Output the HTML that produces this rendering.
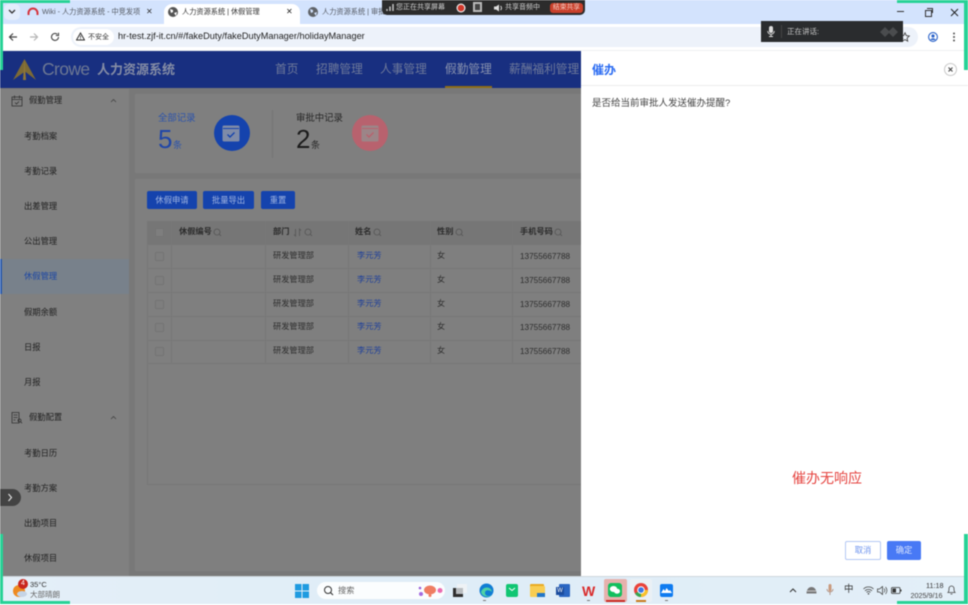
<!DOCTYPE html>
<html lang="zh"><head><meta charset="utf-8"><title>休假管理</title>
<style>
html,body{margin:0;padding:0;background:#fff}
#p{position:relative;width:968px;height:605px;overflow:hidden;background:#fff;font-family:"Liberation Sans","Noto Sans CJK SC",sans-serif;filter:blur(.45px)}
#p div,#p span.t,#p svg{position:absolute}
.t{position:absolute;white-space:nowrap;line-height:1}
.g{background:#27d296}
.si{color:#222;font-size:8.3px;left:24px}
.cb{left:155px;width:7px;height:7px;border:1px solid #737373;border-radius:1px;background:#7e7e7e}
.hl{left:147px;width:434px;height:1px;background:#777}
.vl{top:221px;width:1px;height:142px;background:#777}
.c{font-size:8.2px;color:#2e2e2e}
.h{font-size:8.2px;color:#2b2b2b;font-weight:bold;top:228px}
.b{top:191px;height:18px;background:#1543ad;border-radius:2px;color:#a0b4e0;font-size:8.3px;line-height:18px;text-align:center}
.n{top:64px;font-size:11.7px;color:#6f7a9a}
</style></head><body><div id="p">

<!-- tab strip -->
<div style="left:0;top:0;width:968px;height:24px;background:#d3e3fd"></div>
<div style="left:4px;top:4px;width:16px;height:16px;background:#e4edfc;border-radius:5px"></div>
<svg style="left:8px;top:9px" width="8" height="6"><path d="M1 1l3 3 3-3" fill="none" stroke="#333" stroke-width="1.3"/></svg>
<svg style="left:27px;top:7px" width="12" height="9"><path d="M1.5 8V6a4.5 4.5 0 0 1 9 0v2" fill="none" stroke="#d5333d" stroke-width="2"/></svg>
<span class="t" style="left:42px;top:8px;font-size:7.2px;color:#555a63">Wiki - 人力资源系统 - 中竞发项</span>
<span class="t" style="left:146px;top:8px;font-size:8px;color:#333">✕</span>
<div style="left:164px;top:4px;width:136px;height:20px;background:#fff;border-radius:8px 8px 0 0"></div>
<svg style="left:168px;top:7px" width="10" height="10"><circle cx="5" cy="5" r="5" fill="#555"/><path d="M2 2l3 1v2l-2 1zM6 6l3-1-1 4z" fill="#fff"/></svg>
<span class="t" style="left:182px;top:8px;font-size:7.2px;color:#333">人力资源系统 | 休假管理</span>
<span class="t" style="left:286px;top:8px;font-size:8px;color:#222">✕</span>
<svg style="left:308px;top:7px" width="10" height="10"><circle cx="5" cy="5" r="5" fill="#5f6368"/><path d="M2 2l3 1v2l-2 1zM6 6l3-1-1 4z" fill="#d3e3fd"/></svg>
<span class="t" style="left:322px;top:8px;font-size:7.2px;color:#555a63">人力资源系统 | 审批管理</span>

<!-- share bar -->
<div style="left:382px;top:0;width:203px;height:15px;background:#2c2c2c;border-radius:0 0 5px 5px"></div>
<svg style="left:386px;top:3px" width="8" height="9"><path d="M1 8V6M4 8V3.5M7 8V1" stroke="#ccc" stroke-width="1.4"/></svg>
<span class="t" style="left:396px;top:4px;font-size:7px;color:#d0d0d0">您正在共享屏幕</span>
<svg style="left:456px;top:3px" width="10" height="10"><circle cx="5" cy="5" r="4.500" fill="#eee"/><circle cx="5" cy="5" r="3.300" fill="#d2392c"/></svg>
<div style="left:473px;top:2px;width:9px;height:10px;background:#b9b9b9"></div>
<div style="left:475px;top:4px;width:5px;height:6px;background:#444"></div>
<svg style="left:494px;top:4px" width="10" height="8"><path d="M0 2.500h2L5 .5v7L2 5.500H0z" fill="#ddd"/><path d="M6.500 2a2.500 2.500 0 0 1 0 4" fill="none" stroke="#ddd"/></svg>
<span class="t" style="left:505px;top:4px;font-size:7px;color:#d0d0d0">共享音频中</span>
<div style="left:550px;top:3px;width:33px;height:10px;background:#c9402b;border-radius:3px;color:#f3c9bf;font-size:6.800px;line-height:10px;text-align:center">结束共享</div>

<!-- window controls -->
<div style="left:897px;top:11px;width:7px;height:1px;background:#333"></div>
<div style="left:925px;top:10px;width:5px;height:5px;border:1px solid #333"></div>
<div style="left:927px;top:8px;width:5px;height:1px;background:#333"></div>
<div style="left:932px;top:8px;width:1px;height:5px;background:#333"></div>
<svg style="left:950px;top:8px" width="9" height="9"><path d="M1 1l7 7M8 1l-7 7" stroke="#222" stroke-width="1"/></svg>

<!-- toolbar -->
<div style="left:0;top:24px;width:968px;height:27px;background:#fff"></div>
<svg style="left:8px;top:32px" width="10" height="10"><path d="M9 5H1.500M5 1.500L1.500 5 5 8.500" fill="none" stroke="#444" stroke-width="1.200"/></svg>
<svg style="left:29px;top:32px" width="10" height="10"><path d="M1 5h7.500M5 1.500L8.500 5 5 8.500" fill="none" stroke="#b5b5b5" stroke-width="1.200"/></svg>
<svg style="left:50px;top:32px" width="10" height="10"><path d="M8.500 5A3.500 3.500 0 1 1 7.300 2.300M8.500 .8v2.700H5.800" fill="none" stroke="#444" stroke-width="1.100"/></svg>
<div style="left:71px;top:27px;width:847px;height:20px;background:#edf2fa;border-radius:10px"></div>
<div style="left:73px;top:29px;width:41px;height:16px;background:#fff;border-radius:8px"></div>
<svg style="left:76px;top:32px" width="9" height="9"><path d="M4.500 1L8.500 8H.5z" fill="none" stroke="#333" stroke-width="1"/><path d="M4.500 3.500v2.200M4.500 6.300v.8" stroke="#333" stroke-width=".8"/></svg>
<span class="t" style="left:88px;top:34px;font-size:7px;color:#333">不安全</span>
<span class="t" style="left:118px;top:32px;font-size:9.180px;color:#222">hr-test.zjf-it.cn/#/fakeDuty/fakeDutyManager/holidayManager</span>
<svg style="left:928px;top:32px" width="10" height="10"><circle cx="5" cy="5" r="4.400" fill="none" stroke="#2a62c9" stroke-width="1.100"/><circle cx="5" cy="4" r="1.600" fill="#2a62c9"/><path d="M2.300 8a3 3 0 0 1 5.400 0" fill="#2a62c9"/></svg>
<svg style="left:952px;top:32px" width="4" height="10"><circle cx="2" cy="1.500" r="1" fill="#555"/><circle cx="2" cy="5" r="1" fill="#555"/><circle cx="2" cy="8.500" r="1" fill="#555"/></svg>
<svg style="left:900px;top:32px" width="10" height="10"><path d="M5 .8l1.300 2.800 3 .4-2.200 2.100.6 3L5 7.600 2.300 9.100l.6-3L.7 4l3-.4z" fill="none" stroke="#444" stroke-width=".9"/></svg>
<div style="left:0;top:50px;width:968px;height:1px;background:#eef0f2"></div>

<!-- speaking bubble -->
<div style="left:761px;top:21px;width:142px;height:21px;background:#2a2c2e"></div>
<svg style="left:767px;top:26px" width="8" height="11"><rect x="2" y="0" width="4" height="7" rx="2" fill="#ddd"/><path d="M.7 5a3.300 3.300 0 0 0 6.600 0M4 8.500V10M2 10.500h4" fill="none" stroke="#ddd" stroke-width=".9"/></svg>
<div style="left:781px;top:25px;width:1px;height:13px;background:#444"></div>
<span class="t" style="left:787px;top:28px;font-size:7.500px;color:#c5c5c5">正在讲话:</span>
<svg style="left:880px;top:26px" width="24" height="12"><path d="M0 6l5-5 5 5-5 5zM8 6l5-5 5 5-5 5z" fill="#4a4c4e"/></svg>

<!-- app header -->
<div style="left:0;top:51px;width:581px;height:37px;background:#182f80"></div>
<svg style="left:12px;top:59px" width="25" height="22"><path d="M12.500 0L24 21 13 12.500 1 21z" fill="#7d6a35"/><path d="M12.500 0L14 21H11z" fill="#8f7636"/></svg>
<span class="t" style="left:42px;top:61px;font-size:17.500px;color:#6d7893;letter-spacing:-.6px">Crowe</span>
<span class="t" style="left:97px;top:63px;font-size:13px;font-weight:bold;color:#858da5">人力资源系统</span>
<span class="t n" style="left:275px">首页</span>
<span class="t n" style="left:316px">招聘管理</span>
<span class="t n" style="left:380px">人事管理</span>
<span class="t n" style="left:445px;color:#8a93ae">假勤管理</span>
<span class="t n" style="left:509px">薪酬福利管理</span>
<div style="left:445px;top:86px;width:47px;height:3px;background:#8e6d16"></div>

<!-- main background -->
<div style="left:0;top:88px;width:581px;height:488px;background:#787878"></div>
<div style="left:0;top:89px;width:129px;height:487px;background:#808080"></div>
<div style="left:0;top:259px;width:129px;height:35px;background:#78818b"></div>
<div style="left:0;top:259px;width:1.500px;height:35px;background:#2a5bb0"></div>

<svg style="left:11px;top:95px" width="12" height="12"><rect x="1" y="2" width="10" height="9" fill="none" stroke="#333" stroke-width=".8"/><path d="M1 4.500h10M3.500 .5v3M8.500 .5v3M4 7.500l1.500 1.500L8 6.500" fill="none" stroke="#333" stroke-width=".8"/></svg>
<span class="t si" style="left:29px;top:96px">假勤管理</span>
<svg style="left:110px;top:98px" width="7" height="5"><path d="M1 4l2.500-2.500L6 4" fill="none" stroke="#444" stroke-width=".8"/></svg>
<span class="t si" style="top:132px">考勤档案</span>
<span class="t si" style="top:167px">考勤记录</span>
<span class="t si" style="top:202px">出差管理</span>
<span class="t si" style="top:237px">公出管理</span>
<span class="t si" style="top:272px;color:#1d47a3">休假管理</span>
<span class="t si" style="top:308px">假期余额</span>
<span class="t si" style="top:343px">日报</span>
<span class="t si" style="top:378px">月报</span>
<svg style="left:11px;top:412px" width="12" height="12"><path d="M1 .5h7v10.500H1zM2.500 3h4M2.500 5.500h4M2.500 8h2" fill="none" stroke="#333" stroke-width=".8"/><circle cx="8.500" cy="8.500" r="1.500" fill="none" stroke="#333" stroke-width=".8"/><path d="M9.500 9.700l1.500 1.500" stroke="#333" stroke-width=".8"/></svg>
<span class="t si" style="left:29px;top:413px">假勤配置</span>
<svg style="left:110px;top:415px" width="7" height="5"><path d="M1 4l2.500-2.500L6 4" fill="none" stroke="#444" stroke-width=".8"/></svg>
<span class="t si" style="top:449px">考勤日历</span>
<span class="t si" style="top:484px">考勤方案</span>
<span class="t si" style="top:519px">出勤项目</span>
<span class="t si" style="top:554px">休假项目</span>
<div style="left:0;top:489px;width:21px;height:17px;background:#434343;border-radius:0 9px 9px 0"></div>
<svg style="left:7px;top:493px" width="6" height="9"><path d="M1.500 1l3 3.500-3 3.500" fill="none" stroke="#ddd" stroke-width="1.200"/></svg>

<!-- stat card -->
<div style="left:135px;top:94px;width:446px;height:79px;background:#7f7f7f"></div>
<span class="t" style="left:158px;top:113px;font-size:9.400px;color:#2c53ab">全部记录</span>
<span class="t" style="left:158px;top:126px;font-size:26px;color:#2046a8">5</span>
<span class="t" style="left:173px;top:141px;font-size:9px;color:#2c53ab">条</span>
<div style="left:214px;top:115px;width:36px;height:36px;border-radius:50%;background:#1543ad"></div>
<svg style="left:222px;top:125px" width="18" height="17"><rect x=".5" y=".5" width="17" height="16" rx="1.500" fill="#7f8ba8"/><path d="M1 3.500h16" stroke="#1543ad" stroke-width="1"/><path d="M5.500 9.500l2.500 2.500 4.500-4.500" fill="none" stroke="#1543ad" stroke-width="1.400"/></svg>
<div style="left:272px;top:110px;width:1px;height:48px;background:#747474"></div>
<span class="t" style="left:296px;top:113px;font-size:9.400px;color:#262626">审批中记录</span>
<span class="t" style="left:296px;top:126px;font-size:26px;color:#1c1c1c">2</span>
<span class="t" style="left:311px;top:141px;font-size:9px;color:#2a2a2a">条</span>
<div style="left:352px;top:115px;width:36px;height:36px;border-radius:50%;background:#b8626e"></div>
<svg style="left:361px;top:125px" width="18" height="17"><rect x=".5" y=".5" width="17" height="16" rx="1.500" fill="#9c8588"/><path d="M1 3.500h16" stroke="#b8626e" stroke-width="1"/><path d="M5.500 9.500l2.500 2.500 4.500-4.500" fill="none" stroke="#b8626e" stroke-width="1.400"/></svg>

<!-- list card -->
<div style="left:135px;top:179px;width:446px;height:392px;background:#7f7f7f"></div>
<div class="b" style="left:147px;width:50px">休假申请</div>
<div class="b" style="left:203px;width:51px">批量导出</div>
<div class="b" style="left:261px;width:34px">重置</div>

<div style="left:147px;top:221px;width:434px;height:263px;border-left:1px solid #777;border-bottom:1px solid #777"></div>
<div style="left:147px;top:221px;width:434px;height:23px;background:#767676"></div>
<div class="hl" style="top:244px"></div><div class="hl" style="top:268px"></div><div class="hl" style="top:292px"></div><div class="hl" style="top:316px"></div><div class="hl" style="top:340px"></div><div class="hl" style="top:363px"></div>
<div class="vl" style="left:171px"></div><div class="vl" style="left:265px"></div><div class="vl" style="left:348px"></div><div class="vl" style="left:430px"></div><div class="vl" style="left:512px"></div>
<div class="cb" style="top:228px"></div><div class="cb" style="top:252px"></div><div class="cb" style="top:276px"></div><div class="cb" style="top:300px"></div><div class="cb" style="top:323px"></div><div class="cb" style="top:347px"></div>

<span class="t h" style="left:179px">休假编号</span>
<svg style="left:213px;top:228px" width="9" height="9"><circle cx="4" cy="4" r="3" fill="none" stroke="#555" stroke-width=".8"/><path d="M6.200 6.200l1.800 1.800" stroke="#555" stroke-width=".8"/></svg>
<span class="t h" style="left:273px">部门</span>
<svg style="left:293px;top:228px" width="9" height="9"><path d="M2.500 1v7L1 6.500M6.500 8V1L8 2.500" fill="none" stroke="#555" stroke-width=".8"/></svg>
<svg style="left:304px;top:228px" width="9" height="9"><circle cx="4" cy="4" r="3" fill="none" stroke="#555" stroke-width=".8"/><path d="M6.200 6.200l1.800 1.800" stroke="#555" stroke-width=".8"/></svg>
<span class="t h" style="left:355px">姓名</span>
<svg style="left:373px;top:228px" width="9" height="9"><circle cx="4" cy="4" r="3" fill="none" stroke="#555" stroke-width=".8"/><path d="M6.200 6.200l1.800 1.800" stroke="#555" stroke-width=".8"/></svg>
<span class="t h" style="left:437px">性别</span>
<svg style="left:455px;top:228px" width="9" height="9"><circle cx="4" cy="4" r="3" fill="none" stroke="#555" stroke-width=".8"/><path d="M6.200 6.200l1.800 1.800" stroke="#555" stroke-width=".8"/></svg>
<span class="t h" style="left:520px">手机号码</span>
<svg style="left:554px;top:228px" width="9" height="9"><circle cx="4" cy="4" r="3" fill="none" stroke="#555" stroke-width=".8"/><path d="M6.200 6.200l1.800 1.800" stroke="#555" stroke-width=".8"/></svg>

<span class="t c" style="left:273px;top:252px">研发管理部</span><span class="t c" style="left:357px;top:252px;color:#1f409a">李元芳</span><span class="t c" style="left:437px;top:252px">女</span><span class="t c" style="left:520px;top:252.500px">13755667788</span>
<span class="t c" style="left:273px;top:276px">研发管理部</span><span class="t c" style="left:357px;top:276px;color:#1f409a">李元芳</span><span class="t c" style="left:437px;top:276px">女</span><span class="t c" style="left:520px;top:276.500px">13755667788</span>
<span class="t c" style="left:273px;top:300px">研发管理部</span><span class="t c" style="left:357px;top:300px;color:#1f409a">李元芳</span><span class="t c" style="left:437px;top:300px">女</span><span class="t c" style="left:520px;top:300.500px">13755667788</span>
<span class="t c" style="left:273px;top:323px">研发管理部</span><span class="t c" style="left:357px;top:323px;color:#1f409a">李元芳</span><span class="t c" style="left:437px;top:323px">女</span><span class="t c" style="left:520px;top:323.500px">13755667788</span>
<span class="t c" style="left:273px;top:347px">研发管理部</span><span class="t c" style="left:357px;top:347px;color:#1f409a">李元芳</span><span class="t c" style="left:437px;top:347px">女</span><span class="t c" style="left:520px;top:347.500px">13755667788</span>

<!-- drawer -->
<div style="left:581px;top:51px;width:387px;height:525px;background:#fff"></div>
<div style="left:581px;top:85px;width:387px;height:1px;background:#ececec"></div>
<span class="t" style="left:592px;top:64px;font-size:12px;font-weight:bold;color:#2a6bf2">催办</span>
<div style="left:944px;top:63px;width:11px;height:11px;border:1px solid #c9c9c9;border-radius:50%"></div>
<svg style="left:947px;top:66px" width="7" height="7"><path d="M1.500 1.500l4 4M5.500 1.500l-4 4" stroke="#444" stroke-width="1.100"/></svg>
<span class="t" style="left:592px;top:98.500px;font-size:9.500px;color:#444">是否给当前审批人发送催办提醒?</span>
<span class="t" style="left:792px;top:471px;font-size:14px;color:#e5433f">催办无响应</span>
<div style="left:845px;top:541px;width:34px;height:17px;border:1px solid #b4c8f4;border-radius:2px;color:#6d93ee;font-size:8.300px;line-height:17px;text-align:center">取消</div>
<div style="left:887px;top:541px;width:34px;height:19px;background:#4879f5;border-radius:2px;color:#dbe5fd;font-size:8.300px;line-height:19px;text-align:center">确定</div>

<!-- taskbar -->
<div style="left:0;top:576px;width:968px;height:28px;background:linear-gradient(90deg,#e4eff8,#dfedf7 50%,#e3eff8);border-top:1px solid #cfd6dc;box-sizing:border-box"></div>
<svg style="left:12px;top:583px" width="16" height="16"><circle cx="7" cy="8" r="6" fill="#ee8a1f"/><ellipse cx="10" cy="11" rx="5" ry="3" fill="#c5d4e6"/></svg>
<div style="left:18px;top:579px;width:10px;height:10px;border-radius:50%;background:#c9251d;color:#fff;font-size:7px;line-height:10px;text-align:center">4</div>
<span class="t" style="left:30px;top:581px;font-size:7.500px;color:#333">35°C</span>
<span class="t" style="left:30px;top:590.500px;font-size:7.500px;color:#666">大部晴朗</span>
<svg style="left:295px;top:584px" width="14" height="14"><path d="M0 0h6.500v6.500H0zM7.500 0H14v6.500H7.500zM0 7.500h6.500V14H0zM7.500 7.500H14V14H7.500z" fill="#1f9be0"/></svg>
<div style="left:317px;top:582px;width:128px;height:17px;background:#fbfdfe;border-radius:9px"></div>
<svg style="left:323px;top:585px" width="11" height="11"><circle cx="5" cy="5" r="3.500" fill="none" stroke="#333" stroke-width="1"/><path d="M7.500 7.500l2.500 2.500" stroke="#333" stroke-width="1.100"/></svg>
<span class="t" style="left:338px;top:587px;font-size:8.200px;color:#666">搜索</span>
<svg style="left:418px;top:583px" width="26" height="15"><circle cx="2" cy="5" r="1.300" fill="#9a5fd8"/><circle cx="3" cy="11" r="2" fill="#a46ae0"/><ellipse cx="12" cy="7" rx="6" ry="4.500" fill="#ef7d62"/><circle cx="12" cy="12.500" r="1.500" fill="#ef7d62"/><circle cx="22" cy="7.500" r="2.500" fill="#ea6bb0"/></svg>
<div style="left:457px;top:584px;width:10px;height:9px;background:#eef2f5"></div>
<div style="left:453px;top:588px;width:10px;height:9px;background:#2e2e2e"></div>
<div style="left:456px;top:588px;width:7px;height:6px;background:#b9bdc0"></div>
<svg style="left:479px;top:583px" width="15" height="15"><circle cx="7.500" cy="7.500" r="7" fill="#0f7dd4"/><path d="M2 9c2-6 10-6 11 0-2-2-7-3-7 1 0 3 4 4 7 2-3 3-10 2-11-3z" fill="#4fd1a5"/></svg>
<div style="left:506px;top:584px;width:12px;height:13px;background:#10c673;border-radius:2px"></div>
<svg style="left:508px;top:587px" width="8" height="5"><path d="M1 1l3 2.500L7 1" fill="none" stroke="#fff" stroke-width="1"/></svg>
<div style="left:530px;top:584px;width:14px;height:3px;background:#e9ab22;border-radius:1px 1px 0 0"></div>
<div style="left:530px;top:586px;width:15px;height:11px;background:#f8cd52;border-radius:1px"></div>
<div style="left:537px;top:593px;width:8px;height:4px;background:#2276c7"></div>
<div style="left:559px;top:584px;width:11px;height:13px;background:#2a66c2;border-radius:1px"></div>
<div style="left:556px;top:587px;width:8px;height:8px;background:#1b4c9e;color:#fff;font-size:6px;line-height:8px;text-align:center">W</div>
<span class="t" style="left:582px;top:584px;font-size:14px;font-weight:bold;color:#d92b2b">W</span>
<div style="left:604px;top:579px;width:23px;height:23px;background:#e6b1ad;border-radius:2px"></div>
<div style="left:608px;top:583px;width:14px;height:14px;background:#12bf5d;border-radius:3px"></div>
<svg style="left:609px;top:585px" width="12" height="10"><ellipse cx="4.500" cy="4" rx="3.700" ry="3" fill="#fff"/><ellipse cx="8" cy="6.200" rx="3" ry="2.500" fill="#fff"/></svg>
<div style="left:606px;top:600px;width:19px;height:1.500px;background:#c92a22"></div>
<div style="left:630px;top:579px;width:22px;height:23px;background:#eaf0f5;border-radius:2px"></div>
<svg style="left:634px;top:583px" width="14" height="14"><circle cx="7" cy="7" r="7" fill="#e9423a"/><path d="M7 7L1 10.500A7 7 0 0 0 7.500 14z" fill="#33a852"/><path d="M7 7l0 7A7 7 0 0 0 14 7z" fill="#f8c22b"/><circle cx="7" cy="7" r="3.300" fill="#3b78e7" stroke="#fff" stroke-width="1"/></svg>
<div style="left:636px;top:600px;width:10px;height:1.500px;background:#c77a1a"></div>
<div style="left:660px;top:584px;width:13px;height:13px;background:#0e7bf0;border-radius:2px"></div>
<svg style="left:661px;top:587px" width="11" height="7"><path d="M0 6l2.500-4L4 4l1.500-3L8 4l1-1 2 3z" fill="#fff"/></svg>
<div style="left:483px;top:600px;width:3px;height:1px;background:#777"></div>
<div style="left:587px;top:600px;width:3px;height:1px;background:#777"></div>
<div style="left:665px;top:600px;width:3px;height:1px;background:#777"></div>

<svg style="left:789px;top:587px" width="8" height="6"><path d="M1 5l3-3 3 3" fill="none" stroke="#333" stroke-width="1"/></svg>
<svg style="left:806px;top:586px" width="11" height="8"><path d="M.5 7.500C.5 3 3 1 5.500 1s5 2 5 6.500z" fill="#777"/><path d="M1 5h9" stroke="#ddd" stroke-width=".8"/></svg>
<svg style="left:826px;top:584px" width="8" height="12"><rect x="2.500" y="0" width="3" height="7.500" rx="1.500" fill="#c99a7e"/><path d="M1 5a3 3 0 0 0 6 0M4 8.500V11" fill="none" stroke="#a88472" stroke-width=".8"/></svg>
<span class="t" style="left:844px;top:585px;font-size:9.500px;color:#333">中</span>
<svg style="left:863px;top:586px" width="11" height="9"><path d="M.5 3a7 7 0 0 1 10 0M2 4.800a5 5 0 0 1 7 0M3.500 6.300a3 3 0 0 1 4 0" fill="none" stroke="#444" stroke-width=".8"/><circle cx="5.500" cy="7.800" r=".8" fill="#444"/></svg>
<svg style="left:877px;top:586px" width="11" height="9"><path d="M.5 3h2l3-2.500v8L2.500 6h-2z" fill="none" stroke="#444" stroke-width=".8"/><path d="M7 2.500a2.800 2.800 0 0 1 0 4M8.500 1a5 5 0 0 1 0 7" fill="none" stroke="#444" stroke-width=".7"/></svg>
<svg style="left:891px;top:587px" width="11" height="7"><rect x=".5" y=".5" width="8.500" height="6" rx="1" fill="none" stroke="#333" stroke-width=".8"/><rect x="1.500" y="1.500" width="3.500" height="4" fill="#333"/><rect x="9.500" y="2.500" width="1" height="2" fill="#333"/></svg>
<span class="t" style="left:926px;top:582px;font-size:7.200px;color:#333">11:18</span>
<span class="t" style="left:910.500px;top:591.500px;font-size:7.200px;color:#444">2025/9/16</span>
<svg style="left:947px;top:584px" width="9" height="11"><path d="M1 8.500c1-1 1-2 1-4a2.500 2.500 0 0 1 5 0c0 2 0 3 1 4zM3.500 10h2" fill="none" stroke="#444" stroke-width=".8"/></svg>

<!-- green frame -->
<div class="g" style="left:0;top:0;width:70px;height:3px"></div>
<div class="g" style="left:0;top:0;width:3px;height:70px"></div>
<div class="g" style="left:897px;top:0;width:71px;height:3px"></div>
<div class="g" style="left:964px;top:0;width:4px;height:70px"></div>
<div class="g" style="left:0;top:534px;width:3px;height:70px"></div>
<div class="g" style="left:0;top:601px;width:70px;height:3px"></div>
<div class="g" style="left:964px;top:534px;width:4px;height:70px"></div>
<div class="g" style="left:897px;top:601px;width:71px;height:3px"></div>
</div></body></html>
